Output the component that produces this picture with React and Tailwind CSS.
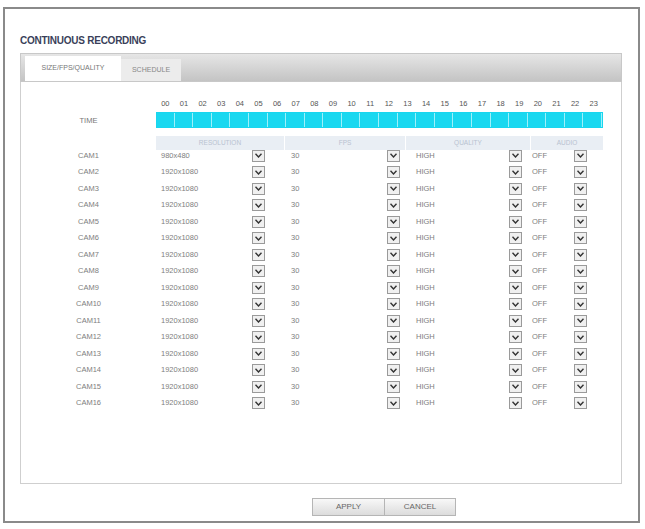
export default function App() {
  const hours = Array.from({ length: 24 }, (_, i) => String(i).padStart(2, "0"));
  const cams = Array.from({ length: 16 }, (_, i) => ({
    name: "CAM" + (i + 1),
    res: i === 0 ? "980x480" : "1920x1080",
  }));
  const Dd = () => (
    <div className="w-[13px] h-[12px] border border-[#9a9a9a] bg-[#f0f0f0] flex items-center justify-center">
      <svg width="7" height="5" viewBox="0 0 7 5"><path d="M0.5 0.8 L3.5 4 L6.5 0.8" fill="none" stroke="#333" strokeWidth="1.4" /></svg>
    </div>
  );
  return (
    <div className="w-[645px] h-[529px] bg-white pt-[7px] pl-[3px]" style={{ fontFamily: '"Liberation Sans", Arial, sans-serif' }}>
      <div className="w-[637px] h-[516px] border-2 border-[#8a8a8a] flex flex-col pl-[15px] pr-[16px]">
        <div className="mt-[24px] text-[10px] font-bold text-[#3a3f5a] tracking-tight">CONTINUOUS RECORDING</div>
        <div className="mt-[5px] h-[29px] flex items-end bg-gradient-to-b from-[#e6e6e6] to-[#c4c4c4] border border-[#c8c8c8] pl-[4px]">
          <div className="h-[25px] w-[96px] bg-white text-[7px] text-[#777] flex items-center justify-center">SIZE/FPS/QUALITY</div>
          <div className="h-[22px] w-[60px] bg-[#ececec] text-[7px] text-[#888] flex items-center justify-center">SCHEDULE</div>
        </div>
        <div className="h-[402px] border border-t-0 border-[#cfcfcf] flex flex-col pt-[16px]">
          <div className="flex">
            <div className="w-[135px]" />
            <div className="w-[447px] grid grid-cols-[repeat(24,1fr)] text-[7.5px] text-[#555] text-center">
              {hours.map((h) => <div key={h}>{h}</div>)}
            </div>
          </div>
          <div className="flex mt-[3px] items-center">
            <div className="w-[135px] text-center text-[7.5px] text-[#777]">TIME</div>
            <div className="w-[447px] h-[16px] grid grid-cols-[repeat(24,1fr)] bg-[#19d6ee] gap-px p-px">
              {hours.map((h) => <div key={h} className="bg-[#1ad8f0] border-r border-[#9ff0fa]" />)}
            </div>
          </div>
          <div className="flex mt-[8px] h-[14px]">
            <div className="w-[135px]" />
            <div className="w-[447px] flex text-[6.5px] text-[#b8c2d0] bg-[#e9eef4]">
              <div className="w-[129px] flex items-center justify-center border-r border-white">RESOLUTION</div>
              <div className="w-[121px] flex items-center justify-center border-r border-white">FPS</div>
              <div className="w-[125px] flex items-center justify-center border-r border-white">QUALITY</div>
              <div className="flex-1 flex items-center justify-center">AUDIO</div>
            </div>
          </div>
          <div className="-mt-[3px] flex flex-col">
            {cams.map((c) => (
              <div key={c.name} className="flex items-center h-[16.5px] text-[7.5px] text-[#7e7e7e]">
                <div className="w-[135px] text-center">{c.name}</div>
                <div className="w-[96px] pl-[5px]">{c.res}</div>
                <Dd />
                <div className="w-[26px]" />
                <div className="w-[96px]">30</div>
                <Dd />
                <div className="w-[16px]" />
                <div className="w-[93px]">HIGH</div>
                <Dd />
                <div className="w-[10px]" />
                <div className="w-[42px]">OFF</div>
                <Dd />
              </div>
            ))}
          </div>
        </div>
        <div className="mt-[14px] flex pl-[292px]">
          <div className="w-[73px] h-[18px] border border-[#b5b5b5] bg-gradient-to-b from-[#f8f8f8] to-[#dcdcdc] text-[8px] text-[#666] flex items-center justify-center">APPLY</div>
          <div className="w-[71px] h-[18px] border border-l-0 border-[#b5b5b5] bg-gradient-to-b from-[#f8f8f8] to-[#dcdcdc] text-[8px] text-[#666] flex items-center justify-center">CANCEL</div>
        </div>
      </div>
    </div>
  );
}
